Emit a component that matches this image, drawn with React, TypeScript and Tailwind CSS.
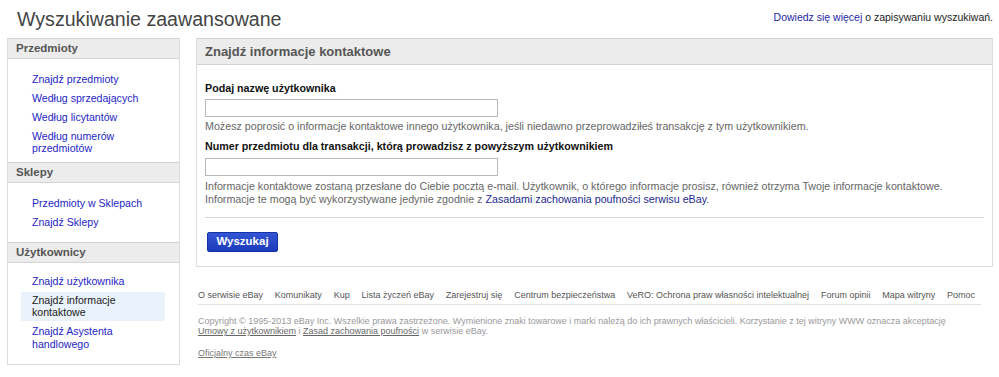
import React from "react";

const sections = [
  {
    title: "Przedmioty",
    pad: "pt-[11.5px] pb-[5px]",
    links: ["Znajdź przedmioty", "Według sprzedających", "Według licytantów", "Według numerów przedmiotów"],
  },
  {
    title: "Sklepy",
    pad: "pt-[12.5px] pb-[11px]",
    links: ["Przedmioty w Sklepach", "Znajdź Sklepy"],
  },
  {
    title: "Użytkownicy",
    pad: "pt-[10px] pb-[11.5px]",
    links: ["Znajdź użytkownika", "Znajdź informacje kontaktowe", "Znajdź Asystenta handlowego"],
  },
];

const footerLinks = [
  "O serwisie eBay",
  "Komunikaty",
  "Kup",
  "Lista życzeń eBay",
  "Zarejestruj się",
  "Centrum bezpieczeństwa",
  "VeRO: Ochrona praw własności intelektualnej",
  "Forum opinii",
  "Mapa witryny",
  "Pomoc",
];

function Sidebar() {
  return (
    <aside className="w-[173px] shrink-0 border border-[#dcdcdc] border-t-0">
      {sections.map((s) => (
        <div key={s.title}>
          <div className="h-[21px] bg-[#ececec] border-t border-b border-[#d4d4d4] pl-[8px] text-[11.5px] font-bold leading-[19px] text-[#555]">
            {s.title}
          </div>
          <ul className={`flex flex-col gap-[2.5px] ml-[13px] w-[144px] ${s.pad}`}>
            {s.links.map((l) => {
              const active = l === "Znajdź informacje kontaktowe";
              return (
                <li
                  key={l}
                  className={`px-[11px] py-[2px] text-[10.6px] leading-[12.5px] ${
                    active ? "bg-[#eaf3fc] text-[#222]" : "text-[#2626c4]"
                  }`}
                >
                  {l}
                </li>
              );
            })}
          </ul>
        </div>
      ))}
    </aside>
  );
}

function ContactPanel() {
  return (
    <div className="border border-[#dcdcdc] border-t-0">
      <div className="h-[27px] bg-[#ececec] border-t border-b border-[#d2d2d2] pl-[8px] text-[13px] font-bold leading-[25px] text-[#555]">
        Znajdź informacje kontaktowe
      </div>
      <div className="pl-[8px] pr-[8px] pt-[17px] pb-[14px] text-[10.7px] leading-[13px]">
        <label className="block font-bold text-[#111]">Podaj nazwę użytkownika</label>
        <input type="text" className="block mt-[3.5px] w-[293px] h-[18px] border border-[#b8b8b8] bg-white" />
        <p className="mt-[3.5px] text-[#666]">
          Możesz poprosić o informacje kontaktowe innego użytkownika, jeśli niedawno przeprowadziłeś transakcję z tym
          użytkownikiem.
        </p>
        <label className="block mt-[6.5px] font-bold text-[#111]">
          Numer przedmiotu dla transakcji, którą prowadzisz z powyższym użytkownikiem
        </label>
        <input type="text" className="block mt-[5px] w-[293px] h-[18px] border border-[#b8b8b8] bg-white" />
        <p className="mt-[4px] text-[#666]">
          Informacje kontaktowe zostaną przesłane do Ciebie pocztą e-mail. Użytkownik, o którego informacje prosisz,
          również otrzyma Twoje informacje kontaktowe.
          <br />
          Informacje te mogą być wykorzystywane jedynie zgodnie z{" "}
          <a className="text-[#1c2a8e]">Zasadami zachowania poufności serwisu eBay</a>.
        </p>
        <div className="mt-[11.5px] h-px bg-[#d8d8d8]" />
        <button className="mt-[14px] ml-[2px] w-[71px] h-[19.5px] rounded-[2px] border border-[#1533a6] bg-linear-to-b from-[#3355d4] to-[#1d3bbb] text-[11.5px] font-bold leading-[17px] text-white">
          Wyszukaj
        </button>
      </div>
    </div>
  );
}

function Footer() {
  return (
    <footer className="mt-[23px] pl-[2px] pr-[12px] text-[9px] leading-[11px]">
      <div className="flex gap-[11.8px] pb-[3.5px] border-b border-[#e2e2e2] text-[#555]">
        {footerLinks.map((l) => (
          <a key={l}>{l}</a>
        ))}
      </div>
      <p className="mt-[10.5px] text-[#999] leading-[10.5px]">
        Copyright © 1995-2013 eBay Inc. Wszelkie prawa zastrzeżone. Wymienione znaki towarowe i marki należą do ich
        prawnych właścicieli. Korzystanie z tej witryny WWW oznacza akceptację
        <br />
        <a className="underline text-[#666]">Umowy z użytkownikiem</a> i{" "}
        <a className="underline text-[#666]">Zasad zachowania poufności</a> w serwisie eBay.
      </p>
      <p className="mt-[11.5px]">
        <a className="underline text-[#777]">Oficjalny czas eBay </a>
      </p>
    </footer>
  );
}

export default function App() {
  return (
    <div className="w-[999px] h-[377px] overflow-hidden bg-white font-['Liberation_Sans',Arial,sans-serif]">
      {/* Title row */}
      <div className="flex justify-between items-start h-[38px] pl-[17px] pr-[6px] pt-[6px]">
        <h1 className="text-[19.6px] leading-[26px] text-[#444]">Wyszukiwanie zaawansowane</h1>
        <p className="mt-[5px] text-[10.5px] leading-[13px] text-[#222]">
          <a className="text-[#1f1fa8]">Dowiedz się więcej</a> o zapisywaniu wyszukiwań.
        </p>
      </div>

      <div className="flex gap-[16px] pl-[7px] pr-[6px]">
        <Sidebar />
        <main className="flex-1">
          <ContactPanel />
          <Footer />
        </main>
      </div>
    </div>
  );
}
